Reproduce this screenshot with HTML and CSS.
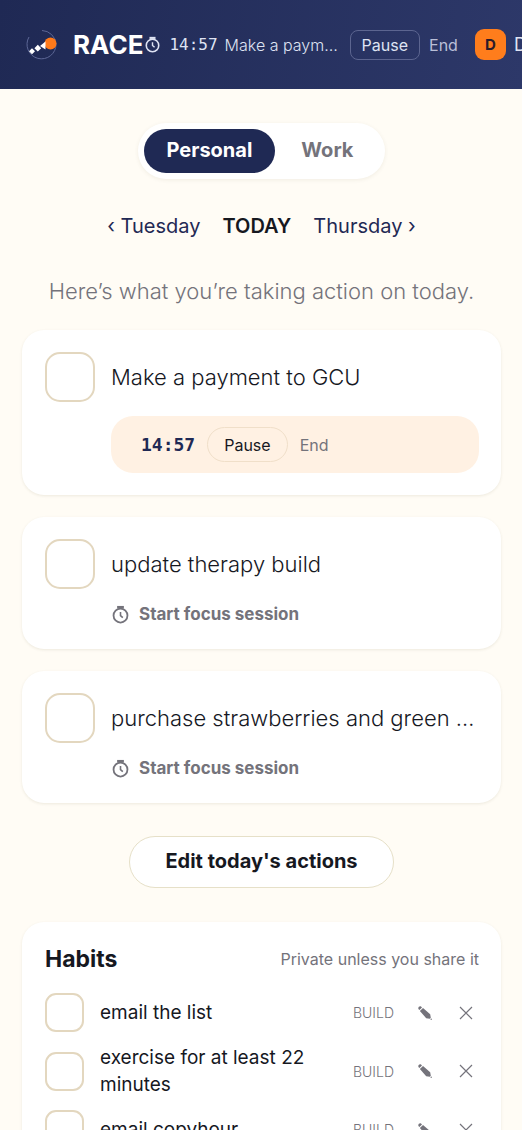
FILE: index.html
```html
<!DOCTYPE html>
<html lang="en">
<head>
<meta charset="utf-8">
<meta name="viewport" content="width=device-width, initial-scale=1">
<title>RACE</title>
<link rel="stylesheet" href="styles.css">
</head>
<body>
<svg class="sprite" aria-hidden="true">
  <symbol id="timer" viewBox="0 0 18 18">
    <circle cx="9" cy="10" r="6.6" fill="none" stroke="currentColor" stroke-width="1.7"/>
    <path d="M5.800 2h6.400" fill="none" stroke="currentColor" stroke-width="2.200"/>
    <path d="M9 6.6V10l2.2 2" fill="none" stroke="currentColor" stroke-width="1.5"/>
  </symbol>
  <symbol id="pencil" viewBox="0 0 14 14">
    <path d="M.4 3C0 1.200 1.200 0 3 .4l1 1L1.400 4zM1.900 5 5 1.900 12.200 8.200l.6 3.600-1 1-3.600-.6z" fill="currentColor"/>
    <circle cx="13.200" cy="13.200" r=".7" fill="currentColor"/>
  </symbol>
  <symbol id="cross" viewBox="0 0 14 14">
    <path d="M1 1l12 12M13 1L1 13" fill="none" stroke="currentColor" stroke-width="1.200"/>
  </symbol>
</svg>

<header class="topbar">
  <a class="brand" href="#">
    <svg class="logo" viewBox="0 0 40 40" aria-hidden="true">
      <path d="M20 5.500a14.500 14.500 0 0 1 14 13.500a14.500 14.500 0 1 1-27-7" fill="none" stroke="#5d6796" stroke-width="1"/>
      <circle cx="28.500" cy="18.500" r="6" fill="#ff7a1a"/>
      <path d="M10 23.300l3 3-3 3-3-3zM15.800 19.800l3.400 3.400-3.400 3.400-3.400-3.400zM23.500 16.500v8l-5.500-3.500z" fill="#fff"/>
    </svg>
    <span>RACE</span>
  </a>
  <div class="session">
    <svg class="icon-sm" aria-hidden="true"><use href="#timer"/></svg>
    <time class="session-time">14:57</time>
    <span class="session-task">Make a payment to GCU</span>
    <button class="session-pause" type="button">Pause</button>
    <button class="link-button session-end" type="button">End</button>
  </div>
  <a class="profile" href="#"><span class="avatar">D</span><span>Dana</span></a>
</header>

<main class="page">
  <div class="switch">
    <button class="switch-item active" type="button">Personal</button>
    <button class="switch-item" type="button">Work</button>
  </div>

  <nav class="days">
    <a href="#">‹ Tuesday</a>
    <strong>TODAY</strong>
    <a href="#">Thursday ›</a>
  </nav>

  <p class="intro">Here’s what you’re taking action on today.</p>

  <section class="tasks">
    <article class="card">
      <label class="task"><input class="check" type="checkbox"><span class="task-name">Make a payment to GCU</span></label>
      <div class="running">
        <time class="running-time">14:57</time>
        <button class="running-pause" type="button">Pause</button>
        <button class="link-button" type="button">End</button>
      </div>
    </article>
    <article class="card">
      <label class="task"><input class="check" type="checkbox"><span class="task-name">update therapy build</span></label>
      <button class="focus" type="button"><svg class="icon" aria-hidden="true"><use href="#timer"/></svg>Start focus session</button>
    </article>
    <article class="card">
      <label class="task"><input class="check" type="checkbox"><span class="task-name">purchase strawberries and green onions</span></label>
      <button class="focus" type="button"><svg class="icon" aria-hidden="true"><use href="#timer"/></svg>Start focus session</button>
    </article>
  </section>

  <button class="edit" type="button">Edit today's actions</button>

  <section class="card habits">
    <div class="habits-head"><h2>Habits</h2><span>Private unless you share it</span></div>
    <ul class="habit-list">
      <li class="habit">
        <label><input class="check small" type="checkbox"><span>email the list</span></label>
        <span class="tag">BUILD</span>
        <button class="icon-button" type="button" aria-label="Edit"><svg><use href="#pencil"/></svg></button>
        <button class="icon-button" type="button" aria-label="Remove"><svg><use href="#cross"/></svg></button>
      </li>
      <li class="habit">
        <label><input class="check small" type="checkbox"><span>exercise for at least 22 minutes</span></label>
        <span class="tag">BUILD</span>
        <button class="icon-button" type="button" aria-label="Edit"><svg><use href="#pencil"/></svg></button>
        <button class="icon-button" type="button" aria-label="Remove"><svg><use href="#cross"/></svg></button>
      </li>
      <li class="habit">
        <label><input class="check small" type="checkbox"><span>email copyhour</span></label>
        <span class="tag">BUILD</span>
        <button class="icon-button" type="button" aria-label="Edit"><svg><use href="#pencil"/></svg></button>
        <button class="icon-button" type="button" aria-label="Remove"><svg><use href="#cross"/></svg></button>
      </li>
    </ul>
  </section>
</main>
</body>
</html>
```
FILE: styles.css
```css
* { box-sizing: border-box; }

body {
  margin: 0;
  height: 100vh;
  overflow: hidden;
  background: #fffcf5;
  color: #16181f;
  font-family: Inter, "Noto Sans", sans-serif;
  font-weight: 400;
}

button {
  margin: 0;
  padding: 0;
  border: 0;
  background: none;
  color: inherit;
  font: inherit;
  white-space: nowrap;
  cursor: pointer;
}

a { color: inherit; text-decoration: none; }
.sprite { display: none; }

.topbar {
  display: flex;
  align-items: center;
  height: 89px;
  padding: 0 22px;
  background: linear-gradient(100deg, #1f2954, #2d3869);
  color: #dfe3f3;
  font-size: 16px;
}
.brand {
  display: flex;
  flex: none;
  align-items: center;
  gap: 11px;
  color: #fff;
  font-size: 26px;
  font-weight: 700;
}
.logo { width: 40px; height: 40px; }
.session { display: flex; flex: none; align-items: center; margin-left: 1px; }
.icon-sm { width: 17px; height: 17px; margin-right: 8px; }
.session-time { margin-right: 7px; font: 16px "DejaVu Sans Mono", monospace; }
.session-task {
  width: 114px;
  margin-right: 11px;
  overflow: hidden;
  font-weight: 300;
  text-overflow: ellipsis;
  white-space: nowrap;
}
.session-pause {
  height: 30px;
  margin-right: 9px;
  padding: 0 11px;
  border: 1px solid #5c6590;
  border-radius: 8px;
}
.link-button { color: #74737b; font-size: 16px; }
.session-end { color: #b9bfd8; }
.profile {
  display: flex;
  flex: none;
  align-items: center;
  gap: 8px;
  margin-left: 17px;
  font-size: 18px;
}
.avatar {
  display: grid;
  place-items: center;
  width: 31px;
  height: 31px;
  border-radius: 9px;
  background: #ff7d1c;
  color: #2b1b2a;
  font-size: 15px;
  font-weight: 700;
}

.page {
  display: flex;
  flex-direction: column;
  align-items: center;
  padding: 34px 21px 34px 22px;
}
.switch {
  display: flex;
  padding: 6px;
  border-radius: 28px;
  background: #fff;
  box-shadow: 0 1px 4px #50401e14;
}
.switch-item {
  height: 44px;
  padding: 0 23px 2px;
  border-radius: 22px;
  color: #74737b;
  font-size: 20px;
  font-weight: 700;
}
.switch-item + .switch-item { padding: 0 26px 2px; }
.switch-item.active { background: #1f2954; color: #fff; }

.days {
  display: flex;
  align-items: center;
  gap: 22px;
  margin-top: 34px;
  color: #1f2954;
  font-size: 20px;
  line-height: 26px;
}
.days strong { color: #16181f; font-weight: 600; }

.intro {
  margin: 36px 0 23px;
  color: #74737b;
  font-size: 22px;
  font-weight: 300;
  line-height: 32px;
}

.tasks { display: flex; flex-direction: column; gap: 22px; width: 100%; }
.card {
  width: 100%;
  padding: 22px 22px 22px 23px;
  border-radius: 22px;
  background: #fff;
  box-shadow: 0 1px 3px #50401e1a;
}
.task { display: flex; align-items: center; gap: 16px; }
.task-name {
  flex: 1;
  min-width: 0;
  overflow: hidden;
  font-size: 22px;
  font-weight: 300;
  line-height: 32px;
  text-overflow: ellipsis;
  white-space: nowrap;
}
.check {
  flex: none;
  appearance: none;
  width: 50px;
  height: 50px;
  margin: 0;
  border: 2px solid #e3d7bf;
  border-radius: 15px;
  background: #fff;
}
.check.small { width: 39px; height: 39px; border-radius: 11px; }

.running {
  display: flex;
  align-items: center;
  gap: 12px;
  margin: 14px 0 0 66px;
  padding: 11px 30px;
  border-radius: 22px;
  background: #fff1e3;
}
.running-time { color: #1f2954; font: bold 18px "DejaVu Sans Mono", monospace; }
.running-pause {
  height: 35px;
  padding: 0 16px;
  border: 1px solid #f0dfc9;
  border-radius: 18px;
  font-size: 16px;
}

.focus {
  display: flex;
  align-items: center;
  gap: 9px;
  margin: 12px 0 0 66px;
  color: #74737b;
  font-size: 17px;
  font-weight: 700;
  line-height: 26px;
}
.icon { width: 19px; height: 19px; }

.edit {
  height: 52px;
  margin: 33px 0 34px;
  padding: 0 35px 2px;
  border: 1px solid #e6e0c8;
  border-radius: 26px;
  background: #fff;
  font-size: 20px;
  font-weight: 700;
}

.habits-head {
  display: flex;
  align-items: center;
  justify-content: space-between;
  color: #74737b;
  font-size: 16px;
}
.habits h2 { margin: 0; color: #16181f; font-size: 23px; font-weight: 700; line-height: 30px; }
.habit-list {
  display: flex;
  flex-direction: column;
  gap: 12px;
  margin: 19px 0 0;
  padding: 0;
  list-style: none;
}
.habit { display: flex; align-items: center; color: #74737b; }
.habit label {
  display: flex;
  flex: 1;
  align-items: center;
  gap: 16px;
  margin-right: 32px;
  color: #16181f;
  font-size: 19px;
  line-height: 27px;
}
.tag { margin-right: 16px; font-size: 14px; font-weight: 300; }
.icon-button { display: grid; place-items: center; width: 30px; height: 30px; }
.icon-button + .icon-button { width: 26px; margin-left: 13px; }
.icon-button svg { width: 14px; height: 14px; }
```
